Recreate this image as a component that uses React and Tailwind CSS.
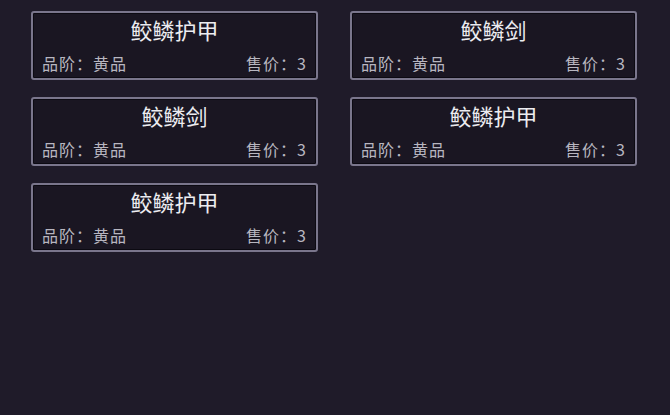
import React from 'react';

const items = [
  { name: '鲛鳞护甲', grade: '黄品', price: 3 },
  { name: '鲛鳞剑', grade: '黄品', price: 3 },
  { name: '鲛鳞剑', grade: '黄品', price: 3 },
  { name: '鲛鳞护甲', grade: '黄品', price: 3 },
  { name: '鲛鳞护甲', grade: '黄品', price: 3 },
];

function ItemCard({ item }) {
  return (
    <div className="h-[69px] rounded-[3px] border-2 border-[#7a768c] bg-[#1a1622] shadow-[inset_0_0_0_1px_#0c0a12] px-[9px] flex flex-col">
      <div className="h-[39px] pt-[1px] text-center text-[22px] leading-[30px] text-[#ececf0]">
        {item.name}
      </div>
      <div className="flex justify-between text-[16px] leading-[22px] text-[#b8b6c0] tracking-[1px]">
        <span>品阶：{item.grade}</span>
        <span>售价：{item.price}</span>
      </div>
    </div>
  );
}

export default function App() {
  return (
    <div
      className="w-[670px] h-[415px] bg-[#1f1b29] pl-[31px] pt-[11px]"
      style={{ fontFamily: '"Noto Sans CJK SC", "Noto Sans", sans-serif' }}
    >
      <div className="grid grid-cols-[287px_287px] gap-x-[32px] gap-y-[17px]">
        {items.map((it, i) => (
          <ItemCard key={i} item={it} />
        ))}
      </div>
    </div>
  );
}
